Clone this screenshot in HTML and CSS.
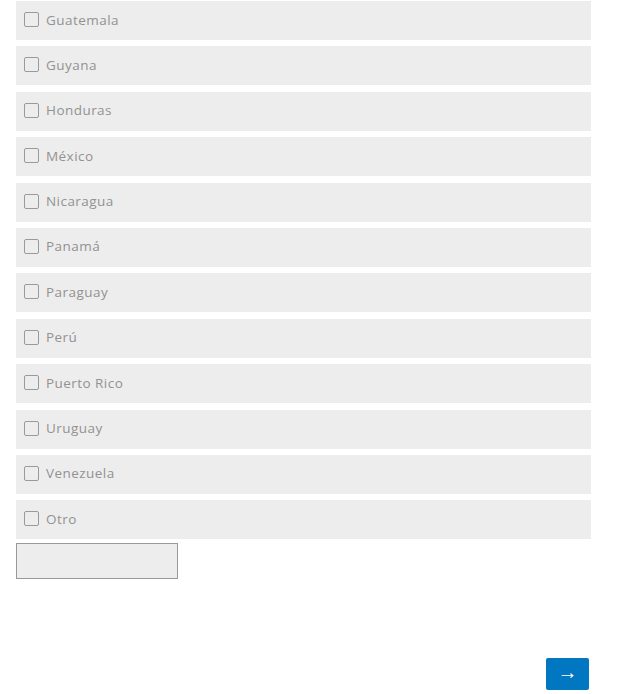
FILE: index.html
```html
<!DOCTYPE html>
<html lang="es">
<head>
  <meta charset="UTF-8">
  <meta name="viewport" content="width=device-width, initial-scale=1.0">
  <title>Países</title>
  <link rel="stylesheet" href="styles.css">
</head>
<body>
  <form class="formulario">
    <div class="opciones">
      <label class="opcion"><input type="checkbox"><span class="caja"></span>Guatemala</label>
      <label class="opcion"><input type="checkbox"><span class="caja"></span>Guyana</label>
      <label class="opcion"><input type="checkbox"><span class="caja"></span>Honduras</label>
      <label class="opcion"><input type="checkbox"><span class="caja"></span>México</label>
      <label class="opcion"><input type="checkbox"><span class="caja"></span>Nicaragua</label>
      <label class="opcion"><input type="checkbox"><span class="caja"></span>Panamá</label>
      <label class="opcion"><input type="checkbox"><span class="caja"></span>Paraguay</label>
      <label class="opcion"><input type="checkbox"><span class="caja"></span>Perú</label>
      <label class="opcion"><input type="checkbox"><span class="caja"></span>Puerto Rico</label>
      <label class="opcion"><input type="checkbox"><span class="caja"></span>Uruguay</label>
      <label class="opcion"><input type="checkbox"><span class="caja"></span>Venezuela</label>
      <label class="opcion"><input type="checkbox"><span class="caja"></span>Otro</label>
    </div>
    <input class="otro" type="text">
    <div class="acciones">
      <button type="button" class="siguiente">&rarr;</button>
    </div>
  </form>
</body>
</html>
```

FILE: styles.css
```css
/* Estilos CSS */
body {
  margin: 0;
  padding: 0;
  background-color: #fff;
  font-family: "Open Sans", Arial, sans-serif;
}
.formulario {
  width: 575px;
  padding: 1px 0 0 16px;
}
.opciones {
  display: flex;
  flex-direction: column;
  gap: 6.4px;
}
.opcion {
  display: flex;
  align-items: center;
  height: 39px;
  padding: 0 0 2px 8px;
  box-sizing: border-box;
  background-color: #ededed;
  color: #929292;
  font-size: 13.5px;
  letter-spacing: 0.45px;
  cursor: pointer;
}
.opcion input {
  display: none;
}
.caja {
  box-sizing: border-box;
  width: 15px;
  height: 15px;
  border: 1px solid #9a9a9a;
  border-radius: 2px;
  margin-right: 7px;
}
.otro {
  display: block;
  box-sizing: border-box;
  width: 162px;
  height: 36px;
  margin-top: 3.6px;
  border: 1px solid #999;
  background-color: #ededed;
}
.acciones {
  display: flex;
  justify-content: flex-end;
  padding-right: 2px;
  margin-top: 79px;
}
.siguiente {
  width: 43px;
  height: 32px;
  background-color: #0077c0;
  color: #fff;
  border: none;
  border-radius: 2px;
  font-size: 20px;
  line-height: 1;
  padding: 0 0 3px;
  cursor: pointer;
}
```
